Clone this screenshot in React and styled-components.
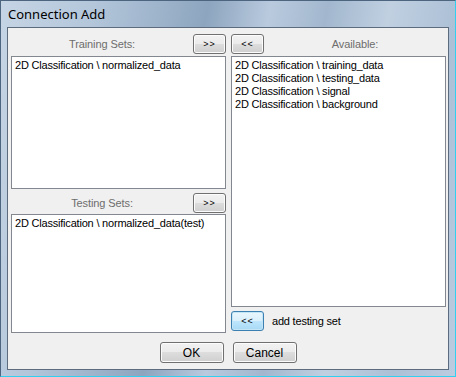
import styled, { createGlobalStyle } from "styled-components";

const GlobalStyle = createGlobalStyle`
  html, body {
    margin: 0;
    padding: 0;
    background: #ffffff;
  }
  * {
    box-sizing: border-box;
  }
`;

const Frame = styled.div`
  width: 456px;
  height: 377px;
  display: flex;
  flex-direction: column;
  border: 1px solid #4e6580;
  border-right-color: #2fd0f0;
  border-bottom-color: #2fd0f0;
  background: linear-gradient(
    100deg,
    #c6d5e5 0%,
    #b3c6da 18%,
    #9fb5cc 30%,
    #8da5bf 40%,
    #b9cade 52%,
    #a2b7ce 63%,
    #c0d0e1 75%,
    #acc0d6 88%,
    #bccce0 100%
  );
  font-family: "Liberation Sans", Arial, sans-serif;
`;

const TitleBar = styled.div`
  height: 26px;
  display: flex;
  align-items: center;
  padding: 0 0 0 7px;
  font-family: "Noto Sans", "Liberation Sans", sans-serif;
  font-size: 13px;
  color: #000;
`;

const Client = styled.div`
  flex: 1;
  margin: 0 6px 6px 6px;
  border: 1px solid #5c6b7e;
  background: #f0f0f0;
  display: flex;
  flex-direction: column;
  padding: 6px 2px 6px 3px;
`;

const Body = styled.div`
  display: grid;
  grid-template-columns: 215px 215px;
  column-gap: 5px;
  align-items: start;
`;

const Column = styled.div`
  display: flex;
  flex-direction: column;
`;

const Header = styled.div`
  display: flex;
  align-items: center;
  height: 20px;
  margin-top: ${(p) => p.$top || 0}px;
  margin-bottom: ${(p) => p.$gap || 2}px;
`;

const Label = styled.div`
  flex: 1;
  text-align: center;
  font-size: 11px;
  letter-spacing: -0.1px;
  color: #6d6d6d;
`;

const Button = styled.button`
  width: ${(p) => p.$w || 33}px;
  height: ${(p) => p.$h || 20}px;
  padding: 0;
  border: 1px solid ${(p) => (p.$focus ? "#3c7fb1" : "#707070")};
  border-radius: 3px;
  background: ${(p) =>
    p.$focus
      ? "linear-gradient(#eaf6fd 0%, #d9f0fc 50%, #bee6fd 50%, #a7d9f5 100%)"
      : "linear-gradient(#f2f2f2 0%, #ebebeb 50%, #dddddd 50%, #cfcfcf 100%)"};
  box-shadow: inset 0 0 0 1px ${(p) => (p.$focus ? "#c4e5f6" : "#fcfcfc")};
  font-family: "Liberation Sans", Arial, sans-serif;
  font-size: ${(p) => (p.$small ? 9 : 12)}px;
  letter-spacing: ${(p) => (p.$small ? 1 : 0)}px;
  color: #000;
  display: flex;
  align-items: center;
  justify-content: center;
`;

const List = styled.div`
  height: ${(p) => p.$h}px;
  border: 1px solid #828790;
  background: #fff;
  padding: 2px 3px;
  font-size: 11px;
  line-height: 13px;
  letter-spacing: -0.2px;
  color: #000;
`;

const Item = styled.div`
  white-space: nowrap;
`;

const Footer = styled.div`
  display: flex;
  align-items: center;
  gap: 8px;
  margin-top: 4px;
  font-size: 11px;
  letter-spacing: -0.2px;
  color: #000;
`;

const Actions = styled.div`
  display: flex;
  justify-content: center;
  gap: 9px;
  margin-top: auto;
  padding-right: 1px;
`;

const training = ["2D Classification \\ normalized_data"];
const testing = ["2D Classification \\ normalized_data(test)"];
const available = [
  "2D Classification \\ training_data",
  "2D Classification \\ testing_data",
  "2D Classification \\ signal",
  "2D Classification \\ background",
];

function App() {
  return (
    <>
      <GlobalStyle />
      <Frame>
        <TitleBar>Connection Add</TitleBar>
        <Client>
          <Body>
            <Column>
              <Header>
                <Label>Training Sets:</Label>
                <Button $small>&gt;&gt;</Button>
              </Header>
              <List $h={133}>
                {training.map((t) => (
                  <Item key={t}>{t}</Item>
                ))}
              </List>
              <Header $top={4} $gap={1}>
                <Label>Testing Sets:</Label>
                <Button $small>&gt;&gt;</Button>
              </Header>
              <List $h={119}>
                {testing.map((t) => (
                  <Item key={t}>{t}</Item>
                ))}
              </List>
            </Column>
            <Column>
              <Header>
                <Button $small>&lt;&lt;</Button>
                <Label>Available:</Label>
              </Header>
              <List $h={251}>
                {available.map((t) => (
                  <Item key={t}>{t}</Item>
                ))}
              </List>
              <Footer>
                <Button $small $focus>
                  &lt;&lt;
                </Button>
                add testing set
              </Footer>
            </Column>
          </Body>
          <Actions>
            <Button $w={64} $h={21}>
              OK
            </Button>
            <Button $w={64} $h={21}>
              Cancel
            </Button>
          </Actions>
        </Client>
      </Frame>
    </>
  );
}

export default App;
